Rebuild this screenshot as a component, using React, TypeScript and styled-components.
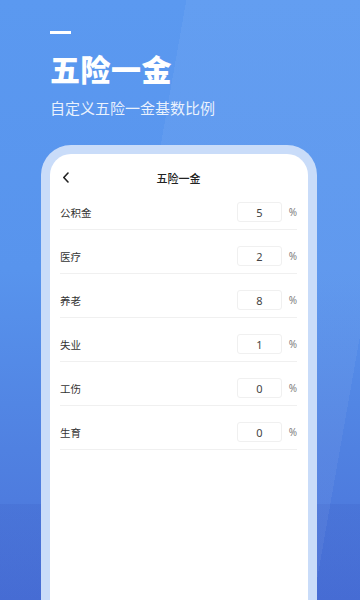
import styled, { createGlobalStyle } from "styled-components";

const GlobalStyle = createGlobalStyle`
  html, body {
    margin: 0;
    padding: 0;
  }
  body {
    font-family: "Noto Sans CJK SC", "Noto Sans", sans-serif;
  }
`;

const Page = styled.div`
  height: 600px;
  overflow: hidden;
  padding: 0 43px 0 41px;
  box-sizing: border-box;
  background:
    linear-gradient(100deg, transparent 40%, rgba(255, 255, 255, 0.05) 40%, rgba(255, 255, 255, 0.05) 90%, transparent 90%),
    linear-gradient(180deg, transparent 84%, rgba(20, 30, 140, 0.07) 84%),
    linear-gradient(180deg, #5b99f0 0%, #5894ed 45%, #5081e1 75%, #4a72d9 100%);
`;

const Heading = styled.div`
  padding: 31px 0 0 9px;
`;

const Dash = styled.div`
  width: 21px;
  height: 3px;
  background: #ffffff;
`;

const Title = styled.h1`
  margin: 16px 0 0;
  font-size: 30px;
  line-height: 36px;
  font-weight: 900;
  color: #ffffff;
  letter-spacing: 0.5px;
`;

const Subtitle = styled.p`
  margin: 12px 0 0;
  font-size: 15px;
  line-height: 20px;
  color: rgba(255, 255, 255, 0.88);
`;

const Frame = styled.div`
  margin-top: 27px;
  height: 480px;
  border: 9px solid #c9dcf9;
  border-bottom: none;
  border-radius: 30px 30px 0 0;
  background: #ffffff;
  padding: 0 11px 0 10px;
`;

const Header = styled.div`
  position: relative;
  height: 32px;
  display: flex;
  align-items: flex-end;
  justify-content: center;
`;

const Back = styled.svg`
  position: absolute;
  left: 2px;
  bottom: 3px;
`;

const HeaderTitle = styled.div`
  font-size: 11px;
  line-height: 16px;
  font-weight: 500;
  color: #222;
`;

const Row = styled.div`
  display: flex;
  align-items: center;
  padding: 17px 0 8px;
  height: 18px;
  border-bottom: 1px solid #f0f0f0;
`;

const Label = styled.span`
  flex: 1;
  font-size: 10.5px;
  color: #333;
`;

const ValueBox = styled.div`
  width: 43px;
  height: 18px;
  border: 1px solid #f0f0f0;
  border-radius: 3px;
  display: flex;
  align-items: center;
  justify-content: center;
  font-family: "Noto Sans", sans-serif;
  font-size: 11px;
  color: #444;
`;

const Unit = styled.span`
  width: 15px;
  text-align: right;
  font-family: "Noto Sans", sans-serif;
  font-size: 10px;
  color: #808080;
`;

const rates = [
  { name: "公积金", value: 5 },
  { name: "医疗", value: 2 },
  { name: "养老", value: 8 },
  { name: "失业", value: 1 },
  { name: "工伤", value: 0 },
  { name: "生育", value: 0 },
];

export default function App() {
  return (
    <>
      <GlobalStyle />
      <Page>
        <Heading>
          <Dash />
          <Title>五险一金</Title>
          <Subtitle>自定义五险一金基数比例</Subtitle>
        </Heading>
        <Frame>
          <Header>
            <Back width="8" height="11" viewBox="0 0 8 11">
              <path d="M6 1 L1.8 5.5 L6 10" fill="none" stroke="#222" strokeWidth="1.6" strokeLinecap="round" strokeLinejoin="round" />
            </Back>
            <HeaderTitle>五险一金</HeaderTitle>
          </Header>
          {rates.map((r) => (
            <Row key={r.name}>
              <Label>{r.name}</Label>
              <ValueBox>{r.value}</ValueBox>
              <Unit>%</Unit>
            </Row>
          ))}
        </Frame>
      </Page>
    </>
  );
}
